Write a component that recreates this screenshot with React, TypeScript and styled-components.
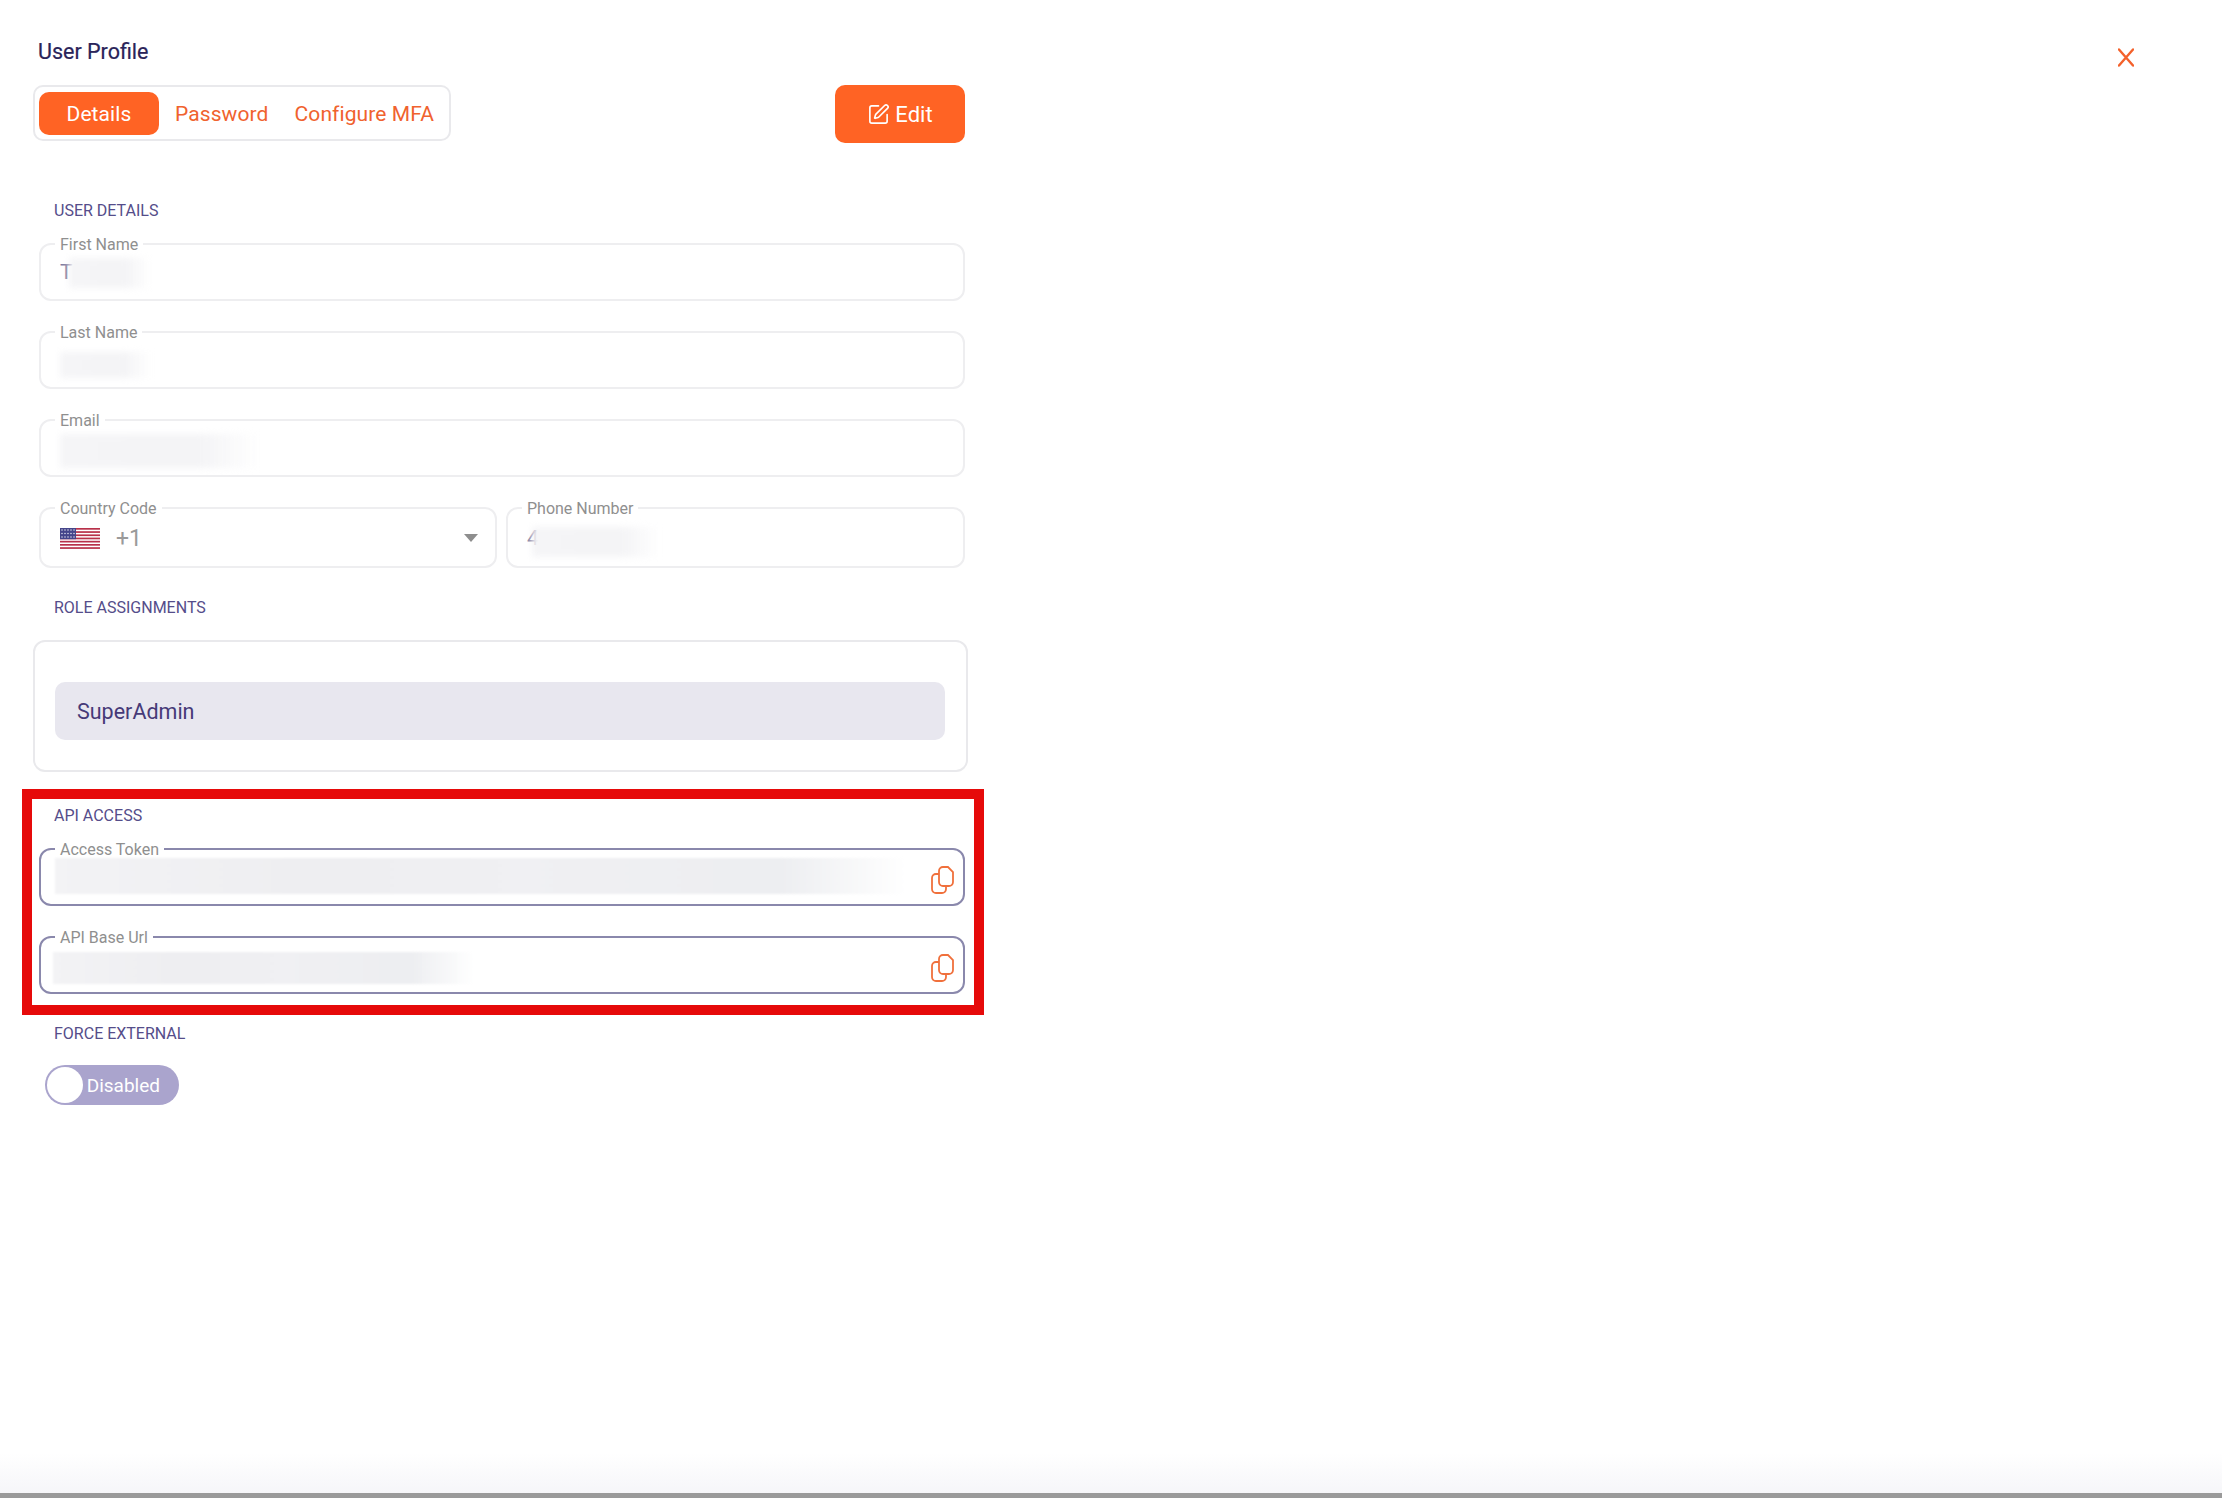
import { FC, ReactNode } from "react"
import styled, { createGlobalStyle } from "styled-components"
import { SquarePen } from "lucide-react"

const GlobalStyle = createGlobalStyle`
  html, body {
    margin: 0;
    padding: 0;
    background: #fff;
    font-family: "Roboto", "Liberation Sans", sans-serif;
  }
  * {
    box-sizing: border-box;
  }
`

const IconCopy = () => (
  <svg width="24" height="28" viewBox="0 0 24 28" fill="none" stroke="#f0703c" strokeWidth="1.8">
    <path d="M12 1h5l5 5v10a4 4 0 0 1-4 4h-6a4 4 0 0 1-4-4V5a4 4 0 0 1 4-4z" />
    <path d="M8 8H5a4 4 0 0 0-4 4v11a4 4 0 0 0 4 4h6a4 4 0 0 0 4-4v-3" />
  </svg>
)

const IconClose = () => (
  <svg width="16" height="19" viewBox="0 0 16 19" fill="none" stroke="#f4612b" strokeWidth="2.4" strokeLinecap="round">
    <path d="M1 1.5l14 16M15 1.5l-14 16" />
  </svg>
)

const IconCaret = () => (
  <svg width="14" height="8" viewBox="0 0 14 8" fill="#8e8e8e">
    <path d="M0 0h14L7 8z" />
  </svg>
)

const IconFlag = () => (
  <svg width="40" height="21" viewBox="0 0 40 21">
    <rect width="40" height="21" fill="#fff" />
    {[0, 3.2, 6.4, 9.6, 12.8, 16, 19.2].map((y) => (
      <rect key={y} y={y} width="40" height="1.7" fill="#b8314a" />
    ))}
    <rect width="16" height="11.2" fill="#45458a" />
    {[2, 5.5, 9].map((y) =>
      [2, 5, 8, 11, 14].map((x) => <circle key={`${x}-${y}`} cx={x} cy={y} r="0.8" fill="#d8d8ea" />),
    )}
  </svg>
)

type FieldProps = {
  label: string
  children: ReactNode
  $active?: boolean
  $tall?: boolean
}

const Field: FC<FieldProps> = ({ label, children, $active, $tall }) => (
  <FieldBox $active={$active} $tall={$tall}>
    <FieldLabel>{label}</FieldLabel>
    <FieldValue $tall={$tall}>{children}</FieldValue>
  </FieldBox>
)

export default function App() {
  return (
    <Page>
      <GlobalStyle />
      <Content>
        <Form>
          <Title>User Profile</Title>
          <Toolbar>
            <Tabs>
              <Tab $selected>Details</Tab>
              <Tab>Password</Tab>
              <Tab>Configure MFA</Tab>
            </Tabs>
            <EditButton>
              <SquarePen size={23} strokeWidth={1.7} />
              Edit
            </EditButton>
          </Toolbar>

          <SectionLabel $top={59}>USER DETAILS</SectionLabel>
          <Fields>
            <Field label="First Name">
              <ValueText>T</ValueText>
              <Redacted $soft $width={82} $height={30} $left={-4} $top={2} />
            </Field>
            <Field label="Last Name">
              <Redacted $soft $width={92} $height={26} $top={8} />
            </Field>
            <Field label="Email">
              <Redacted $soft $width={200} $height={34} $top={2} />
            </Field>
            <FieldPair>
              <Field label="Country Code" $tall>
                <IconFlag />
                <CountryCode>+1</CountryCode>
                <CaretSlot>
                  <IconCaret />
                </CaretSlot>
              </Field>
              <Field label="Phone Number" $tall>
                <ValueText>4</ValueText>
                <Redacted $soft $width={128} $height={30} $left={-7} $top={8} />
              </Field>
            </FieldPair>
          </Fields>

          <SectionLabel $top={31}>ROLE ASSIGNMENTS</SectionLabel>
          <RoleBox>
            <RoleItem>SuperAdmin</RoleItem>
          </RoleBox>

          <Highlight>
            <SectionLabel $top={0}>API ACCESS</SectionLabel>
            <Fields>
              <Field label="Access Token" $active>
                <Redacted $width={851} $height={36} $left={-5} $top={-3} />
                <CopyButton>
                  <IconCopy />
                </CopyButton>
              </Field>
              <Field label="API Base Url" $active>
                <Redacted $width={422} $height={32} $left={-7} $top={3} />
                <CopyButton>
                  <IconCopy />
                </CopyButton>
              </Field>
            </Fields>
          </Highlight>

          <SectionLabel $top={10}>FORCE EXTERNAL</SectionLabel>
          <Toggle>
            <ToggleKnob />
            Disabled
          </Toggle>
        </Form>
        <CloseButton>
          <IconClose />
        </CloseButton>
      </Content>
      <BottomFade />
      <BottomEdge />
    </Page>
  )
}

const Page = styled.div`
  height: 1498px;
  display: flex;
  flex-direction: column;
  overflow: hidden;
  background: #fff;
`

const Content = styled.div`
  flex: 1;
  display: flex;
  align-items: flex-start;
  padding-left: 39px;
`

const Form = styled.div`
  width: 926px;
  display: flex;
  flex-direction: column;
  padding-top: 37px;
`

const Title = styled.div`
  margin-left: -1px;
  font-size: 21.5px;
  line-height: 30px;
  color: #2a2459;
  -webkit-text-stroke: 0.2px #2a2459;
`

const Toolbar = styled.div`
  margin: 18px 0 0 -6px;
  display: flex;
  justify-content: space-between;
  align-items: flex-start;
`

const Tabs = styled.div`
  width: 418px;
  height: 56px;
  padding: 5px 4px;
  display: flex;
  align-items: center;
  border: 2px solid #e9e9ec;
  border-radius: 10px;
`

const Tab = styled.div<{ $selected?: boolean }>`
  height: 43px;
  display: flex;
  align-items: center;
  justify-content: center;
  padding-top: 2px;
  font-size: 21px;
  letter-spacing: 0.1px;
  color: ${(p) => (p.$selected ? "#fff" : "#f0622e")};
  padding-left: ${(p) => (p.$selected ? 27.5 : 16)}px;
  padding-right: ${(p) => (p.$selected ? 27.5 : 10)}px;
  background: ${(p) => (p.$selected ? "#ff6324" : "transparent")};
  border-radius: 10px;
  white-space: nowrap;
`

const EditButton = styled.div`
  width: 130px;
  height: 58px;
  display: flex;
  align-items: center;
  justify-content: center;
  gap: 5px;
  font-size: 22px;
  color: #fff;
  background: #ff6324;
  border-radius: 10px;
`

const SectionLabel = styled.div<{ $top: number }>`
  margin: ${(p) => p.$top}px 0 0 15px;
  font-size: 16px;
  line-height: 18px;
  color: #554d8a;
`

const Fields = styled.div`
  margin-top: 12px;
  display: flex;
  flex-direction: column;
  gap: 19px;
`

const FieldPair = styled.div`
  display: grid;
  grid-template-columns: 458px 459px;
  gap: 9px;
`

const FieldBox = styled.fieldset<{ $active?: boolean; $tall?: boolean }>`
  margin: 0;
  min-width: 0;
  height: ${(p) => (p.$tall ? 72 : 69)}px;
  padding: 0 8px 0 19px;
  border: 2px solid ${(p) => (p.$active ? "#8a88ac" : "#eeeef0")};
  border-radius: 12px;
`

const FieldLabel = styled.legend`
  margin-left: -5px;
  padding: 4px 5px 2px;
  font-size: 16px;
  line-height: 18px;
  color: #8f8f8f;
`

const FieldValue = styled.div<{ $tall?: boolean }>`
  height: ${(p) => (p.$tall ? 36 : 32)}px;
  display: flex;
  align-items: ${(p) => (p.$tall ? "center" : "flex-start")};
`

const ValueText = styled.span`
  font-size: 21px;
  line-height: 32px;
  color: #7f7ca0;
`

const CountryCode = styled.span`
  margin-left: 16px;
  font-size: 23px;
  color: #9a9a9a;
`

const CaretSlot = styled.span`
  display: flex;
  margin: 0 9px 0 auto;
`

const Redacted = styled.div<{ $width: number; $height: number; $left?: number; $top?: number; $soft?: boolean }>`
  flex: none;
  width: ${(p) => p.$width}px;
  height: ${(p) => p.$height}px;
  margin-left: ${(p) => p.$left ?? 0}px;
  margin-top: ${(p) => p.$top ?? 0}px;
  background: ${(p) =>
    p.$soft
      ? "linear-gradient(to right, #f5f5f7 0%, #f4f4f6 70%, rgba(255, 255, 255, 0) 100%)"
      : "linear-gradient(to right, #f3f3f5 0%, #eeeef1 30%, #f0f0f3 55%, #edeef1 85%, rgba(255, 255, 255, 0) 100%)"};
  filter: blur(${(p) => (p.$soft ? 3 : 1)}px);
`

const CopyButton = styled.span`
  display: flex;
  margin: 5px 0 0 auto;
`

const RoleBox = styled.div`
  margin: 23px -3px 0 -6px;
  height: 132px;
  padding: 40px 21px 0 20px;
  border: 2px solid #e9e9ec;
  border-radius: 12px;
`

const RoleItem = styled.div`
  height: 58px;
  padding-left: 22px;
  display: flex;
  align-items: center;
  font-size: 21.5px;
  color: #463a78;
  background: #e8e7ef;
  border-radius: 10px;
`

const Highlight = styled.div`
  margin: 17px -19px 0 -17px;
  padding: 8px 9px 11px 7px;
  border: 10px solid #e60a0a;
`

const Toggle = styled.div`
  margin: 22px 0 0 6px;
  width: 134px;
  height: 40px;
  padding: 0 19px 0 2px;
  display: flex;
  align-items: center;
  justify-content: space-between;
  font-size: 19px;
  color: #fff;
  background: #aaa4cd;
  border-radius: 20px;
`

const ToggleKnob = styled.span`
  width: 36px;
  height: 36px;
  background: #fff;
  border-radius: 50%;
`

const CloseButton = styled.div`
  display: flex;
  margin: 48px 88px 0 auto;
`

const BottomFade = styled.div`
  height: 40px;
  background: linear-gradient(to bottom, #fff 0%, #f6f6f9 100%);
`

const BottomEdge = styled.div`
  height: 5px;
  background: #9a9a9a;
`
